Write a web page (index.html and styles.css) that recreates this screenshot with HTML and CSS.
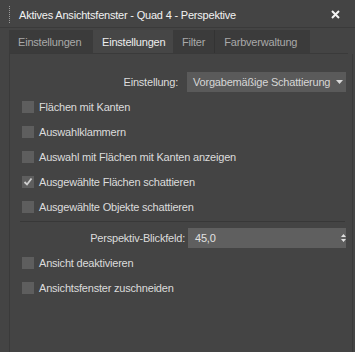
FILE: index.html
```html
<!DOCTYPE html>
<html>
<head>
    <title>Aktives Ansichtsfenster</title>
    <link rel="stylesheet" href="styles.css">
</head>
<body>
    <div class="window">
        <div class="titlebar">
            <span class="grip"></span>
            <span class="title">Aktives Ansichtsfenster - Quad 4 - Perspektive</span>
            <svg class="close" width="9" height="9" viewBox="0 0 9 9"><path d="M1 1L8 8M8 1L1 8" stroke="#f4f4f4" stroke-width="2"/></svg>
        </div>
        <div class="tabs">
            <div class="tab">Einstellungen</div>
            <div class="tab active">Einstellungen</div>
            <div class="tab">Filter</div>
            <div class="tab sep">Farbverwaltung</div>
        </div>
        <div class="panel">
            <div class="field">
                <span class="label">Einstellung:</span>
                <div class="select">Vorgabemäßige Schattierung
                    <svg width="7" height="4" viewBox="0 0 7 4"><path d="M0 0H7L3.5 4Z" fill="#d8d8d8"/></svg>
                </div>
            </div>
            <div class="check"><span class="box"></span>Flächen mit Kanten</div>
            <div class="check"><span class="box"></span>Auswahlklammern</div>
            <div class="check"><span class="box"></span>Auswahl mit Flächen mit Kanten anzeigen</div>
            <div class="check"><span class="box"><svg width="12" height="12" viewBox="0 0 12 12"><path d="M2.5 6L5 8.5L9.5 2.5" stroke="#cfcfcf" stroke-width="1.8" fill="none"/></svg></span>Ausgewählte Flächen schattieren</div>
            <div class="check"><span class="box"></span>Ausgewählte Objekte schattieren</div>
            <div class="divider"></div>
            <div class="field">
                <span class="label narrow">Perspektiv-Blickfeld:</span>
                <div class="spinner">45,0
                    <svg width="5" height="10" viewBox="0 0 5 10"><path d="M0 4L2.5 1L5 4Z M0 6L2.5 9L5 6Z" fill="#e0e0e0"/></svg>
                </div>
            </div>
            <div class="check"><span class="box"></span>Ansicht deaktivieren</div>
            <div class="check"><span class="box"></span>Ansichtsfenster zuschneiden</div>
        </div>
    </div>
</body>
</html>
```

FILE: styles.css
```css
html, body{
    margin: 0;
    padding: 0;
    height: 100%;
}
body{
    background: #444444;
    font-family: "Liberation Sans", Arial, sans-serif;
    font-size: 11px;
    letter-spacing: -0.2px;
    color: #dcdcdc;
}
.window{
    display: flex;
    flex-direction: column;
    height: 100%;
}
.titlebar{
    height: 28px;
    display: flex;
    align-items: center;
    border-bottom: 1px solid #3a3a3a;
    padding-left: 9px;
    box-sizing: border-box;
}
.grip{
    width: 1px;
    height: 17px;
    border-left: 1px dotted #9a9a9a;
    margin-right: 8px;
    margin-top: 1px;
}
.title{
    color: #f2f2f2;
    font-size: 11px;
    flex: 1;
    margin-top: 2px;
}
.close{
    margin-right: 15px;
    margin-top: 2px;
}
.tabs{
    display: flex;
    margin: 2px 7px 0 9px;
    height: 23px;
    border-bottom: 1px solid #3a3a3a;
}
.tab{
    background: #3b3b3b;
    color: #a9a9a9;
    padding: 0 9px;
    display: flex;
    align-items: center;
}
.tab:first-child{
    width: 66px;
}
.tab.active{
    background: #464646;
    color: #eeeeee;
    width: 62px;
}
.tab.sep{
    border-left: 1px solid #333333;
    width: 77px;
}
.panel{
    flex: 1;
    margin-left: 9px;
    margin-right: 2px;
    border-left: 1px solid #3a3a3a;
    border-right: 1px solid #3a3a3a;
    padding: 15px 6px 0 12px;
}
.field{
    height: 25px;
    display: flex;
    align-items: center;
    justify-content: flex-end;
}
.label{
    margin-right: 9px;
}
.label.narrow{
    margin-right: 3px;
}
.select, .spinner{
    height: 20px;
    box-sizing: border-box;
    background: #5a5a5a;
    display: flex;
    align-items: center;
    justify-content: space-between;
    padding: 0 3px 0 6px;
    color: #d6d6d6;
}
.select{
    width: 159px;
}
.spinner{
    width: 158px;
    background: #5f5f5f;
    padding: 0 0 0 7px;
    color: #e2e2e2;
}
.check{
    height: 25px;
    display: flex;
    align-items: center;
}
.box{
    width: 12px;
    height: 12px;
    background: #5e5e5e;
    margin-right: 5px;
    display: block;
}
.box svg{
    display: block;
}
.divider{
    height: 1px;
    background: #383838;
    margin: 2px 1px 3px -2px;
}
```
